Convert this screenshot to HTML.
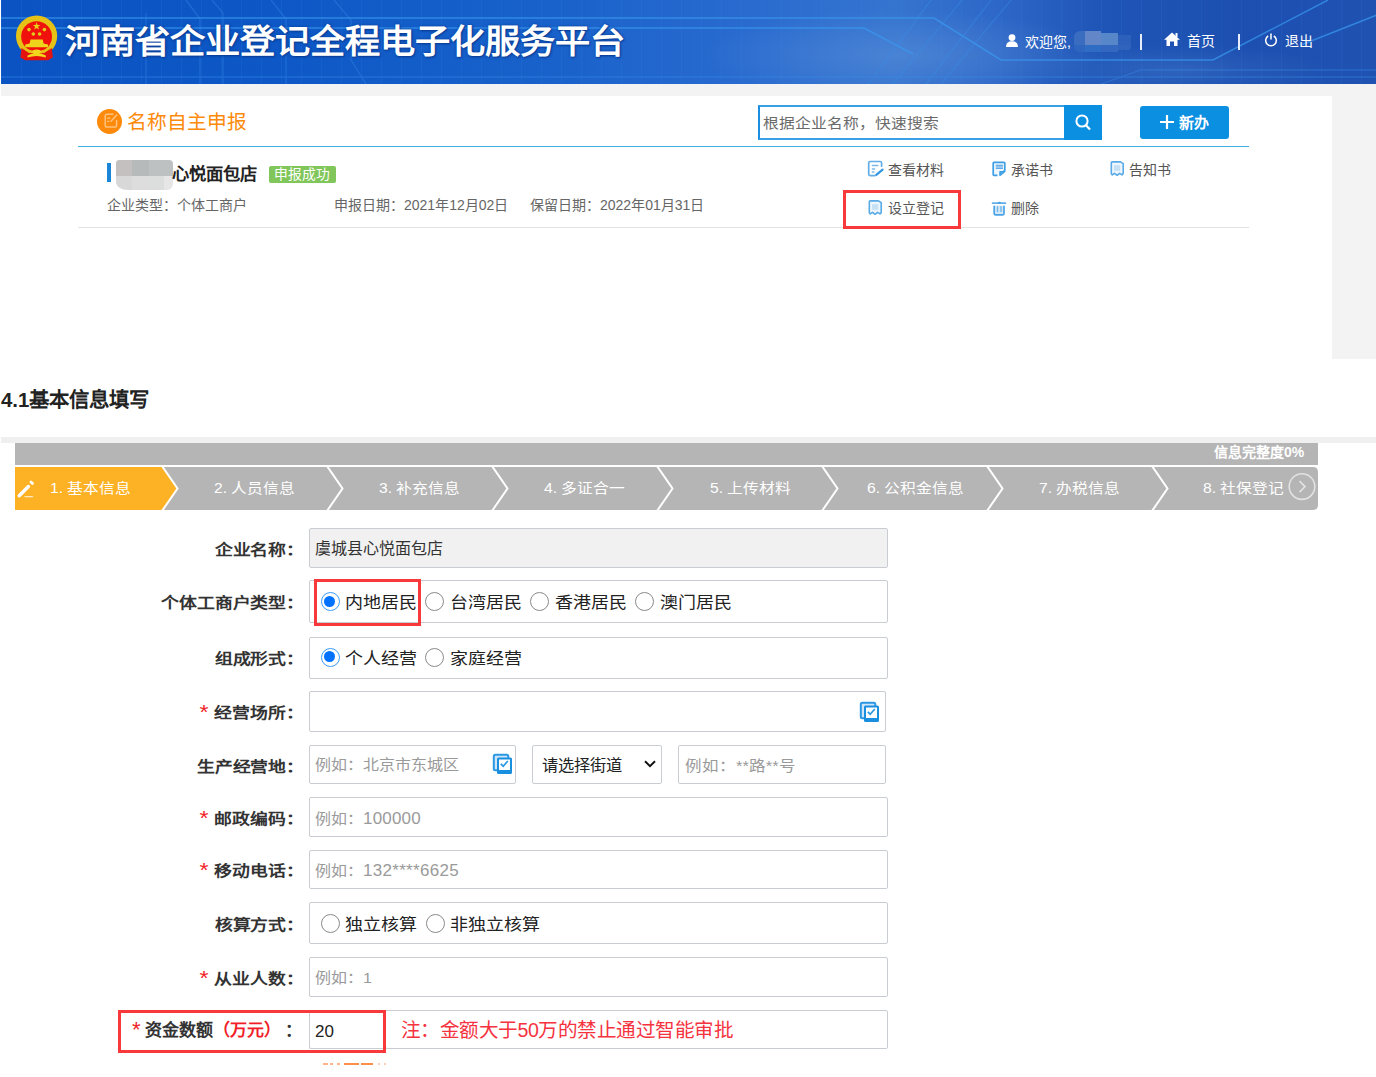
<!DOCTYPE html>
<html lang="zh-CN"><head><meta charset="utf-8">
<style>
*{margin:0;padding:0;box-sizing:border-box}
html,body{width:1376px;height:1077px;overflow:hidden;background:#fff;font-family:"Liberation Sans",sans-serif;color:#333}
.a{position:absolute;white-space:nowrap;line-height:1}
#banner{position:absolute;left:1px;top:0;width:1375px;height:84px;overflow:hidden;
background:linear-gradient(90deg,#0b53c2 0%,#0d58c6 20%,#1962cb 40%,#2a6bcf 55%,#3574cf 65%,#2e68c8 72%,#1f55b6 80%,#1c4fb0 90%,#2052b2 100%)}
#strip1{position:absolute;left:1px;top:84px;width:1375px;height:12px;background:#f3f3f3}
#rgray{position:absolute;left:1332px;top:96px;width:44px;height:263px;background:#f3f3f3}
.box{position:absolute;left:309px;width:579px;border:1px solid #c9cdd2;border-radius:2px;background:#fff}
.lbl{position:absolute;font-weight:bold;font-size:17px;color:#333;text-align:right;right:1072px;white-space:nowrap;line-height:1;transform:scale(1.05,0.9);transform-origin:100% 50%}
.star{color:#f01e28;font-weight:normal;margin-right:6px;display:inline-block;transform:scale(1.3,1.3) translate(-0.5px,-0.5px)}
.rad{position:absolute;width:19px;height:19px;border-radius:50%;border:1.5px solid #8a8a8a;background:#fff}
.rad.on{border:1.7px solid #3a9cfb}
.rad.on::after{content:"";position:absolute;left:2.8px;top:2.8px;width:11px;height:11px;border-radius:50%;background:#0072ff}
.rt{position:absolute;font-size:18px;color:#222;line-height:1;white-space:nowrap;transform:scaleY(0.9);transform-origin:0 50%}
.ph{position:absolute;font-size:16px;color:#9a9a9a;line-height:1;white-space:nowrap;transform:scaleY(.92);transform-origin:0 50%}
.tabx{position:absolute;top:467px;height:43px;color:#fff;font-size:15px}
</style></head><body>

<!-- ===== Screenshot 1: header ===== -->
<div id="banner">
  <svg width="1375" height="84" style="position:absolute;left:0;top:0">
    <defs>
      <radialGradient id="cloud" cx="0.5" cy="0.5" r="0.5">
        <stop offset="0" stop-color="#5a8fd8" stop-opacity="0.55"/>
        <stop offset="1" stop-color="#5a8fd8" stop-opacity="0"/>
      </radialGradient>
      <pattern id="grid" width="20" height="84" patternUnits="userSpaceOnUse">
        <rect x="0" y="0" width="1" height="84" fill="#3d8ae8" opacity="0.12"/>
      </pattern>
    </defs>
    <rect width="1375" height="84" fill="url(#grid)"/>
    <ellipse cx="900" cy="55" rx="200" ry="45" fill="url(#cloud)"/><ellipse cx="1180" cy="70" rx="150" ry="25" fill="url(#cloud)" opacity=".5"/>
    <g stroke="#3a9af0" stroke-width="1.5" fill="none" opacity="0.7">
      <path d="M0 18 H933 L1000 60 H1212 L1327 0"/>
      <path d="M1300 45 L1376 15"/>
      <path d="M0 28 H863 L912 54"/>
    </g>
    <g stroke="#3a90ec" stroke-width="1.3" fill="none" opacity="0.35">
      <path d="M0 77 H1376"/>
      <path d="M145 13 V84 M185 0 L199 19 V84 M211 0 L222 13 V84 M270 0 L285 19 V84 M333 0 L350 20 V60 L365 84"/>
      <path d="M863 90 L930 0 M887 90 L961 0 M925 84 L990 0 M940 84 L1010 0"/>
      <path d="M1100 84 L1140 70 H1376"/>
    </g>
  </svg>
  <!-- emblem -->
  <svg width="54" height="54" style="position:absolute;left:9px;top:10px" viewBox="10 10 54 54">
    <circle cx="36.6" cy="36" r="20.6" fill="#e6c216"/>
    <circle cx="36.6" cy="36.6" r="15.4" fill="#f0100c"/>
    <polygon points="36.6,22.2 37.6,25 40.4,25 38.1,26.8 39,29.6 36.6,27.9 34.2,29.6 35.1,26.8 32.8,25 35.6,25" fill="#e8d01a"/>
    <circle cx="29" cy="29.6" r="1.8" fill="#e2cc1c"/><circle cx="44.4" cy="29.6" r="1.8" fill="#e2cc1c"/>
    <circle cx="33.3" cy="34" r="1.8" fill="#e2cc1c"/><circle cx="39.6" cy="34" r="1.8" fill="#e2cc1c"/>
    <polygon points="30.5,39.6 42.7,39.6 43.6,43.4 48,44.4 48,47.2 25.2,47.2 25.2,44.4 29.6,43.4" fill="#eed41a"/>
    <path d="M23 47.5 Q36.6 57 50.5 47.5" fill="none" stroke="#e6c216" stroke-width="2.2"/>
    <path d="M21.5 48 L29 53 H44.2 L51.8 48 L52.8 57.5 L48 60.2 H25.2 L20.4 57.5 Z" fill="#e5130f"/>
    <path d="M27.5 55.4 Q36.6 50.8 45.8 55.4 V57.6 Q36.6 54.2 27.5 57.6 Z" fill="#f2d81c"/>
    <ellipse cx="36.6" cy="51.8" rx="4.2" ry="2.4" fill="#f2d81c"/>
  </svg>
  <div class="a" style="left:64px;top:24px;font-size:35.2px;font-weight:bold;color:#fff;text-shadow:0 0 3px #0b3d96,1px 1px 2px #0b3d96;transform:scaleY(.94);transform-origin:0 50%">河南省企业登记全程电子化服务平台</div>
  <!-- right nav -->
  <svg width="12" height="13" style="position:absolute;left:1005px;top:34px" viewBox="0 0 12 13"><circle cx="6" cy="3.6" r="3.4" fill="#fff"/><path d="M0 13 Q0 7.2 6 7.2 Q12 7.2 12 13 Z" fill="#fff"/></svg>
  <div class="a" style="left:1024px;top:35px;font-size:14px;color:#fff">欢迎您,</div>
  <div style="position:absolute;left:1073.2px;top:31px;width:57px;height:21px;overflow:hidden;border-radius:6px 3px 6px 6px">
<div style="position:absolute;left:0;top:0;width:10.6px;height:14px;background:#3a6cc0"></div>
<div style="position:absolute;left:10.6px;top:0;width:16.1px;height:14px;background:#6386c8"></div>
<div style="position:absolute;left:26.7px;top:1.5px;width:16.9px;height:12.5px;background:#5787c8"></div>
<div style="position:absolute;left:43.6px;top:4px;width:13.4px;height:10px;background:#2d60ba"></div>
<div style="position:absolute;left:0;top:14px;width:10.6px;height:7px;background:#2f66bf"></div>
<div style="position:absolute;left:10.6px;top:14px;width:16.1px;height:7px;background:#2f6cc4"></div>
<div style="position:absolute;left:26.7px;top:14px;width:16.9px;height:7px;background:#3468c0"></div>
<div style="position:absolute;left:43.6px;top:14px;width:13.4px;height:5px;background:#3063bb"></div>
</div>
  <div style="position:absolute;left:1138.5px;top:34px;width:2px;height:15.5px;background:#e6edfb"></div>
  <svg width="16" height="14" style="position:absolute;left:1163px;top:32px" viewBox="0 0 16 14"><path d="M8 0.5 L16 7.8 L13.5 7.8 L13.5 14 L10 14 L10 9.5 L6 9.5 L6 14 L2.5 14 L2.5 7.8 L0 7.8 Z" fill="#fff"/><rect x="11.5" y="1" width="2" height="4" fill="#fff"/></svg>
  <div class="a" style="left:1185.5px;top:34px;font-size:14px;color:#fff">首页</div>
  <div style="position:absolute;left:1237.3px;top:34px;width:2px;height:15.5px;background:#e6edfb"></div>
  <svg width="14" height="14" style="position:absolute;left:1263px;top:33px" viewBox="0 0 14 14"><path d="M4.2 3 A5.3 5.3 0 1 0 9.8 3" fill="none" stroke="#fff" stroke-width="1.5"/><path d="M7 0.5 V6.5" stroke="#fff" stroke-width="1.5"/></svg>
  <div class="a" style="left:1284px;top:34px;font-size:14px;color:#fff">退出</div>
</div>
<div id="strip1"></div>
<div id="rgray"></div>

<!-- title row -->
<div style="position:absolute;left:97px;top:108.6px;width:25.2px;height:25.2px;border-radius:50%;background:#fd8a0b"></div>
<svg width="18" height="18" style="position:absolute;left:103px;top:112px" viewBox="0 0 18 18"><path d="M10 2.2 H4 Q2.2 2.2 2.2 4 V13.2 Q2.2 15 4 15 H11.8 Q13.6 15 13.6 13.2 V8.5" fill="none" stroke="#ffc27e" stroke-width="1.5" stroke-linecap="round"/><path d="M8 9.2 L13.8 3" stroke="#ffc27e" stroke-width="1.5" stroke-linecap="round"/><path d="M4.6 6.2 H6.8 M4.6 9.4 H5.8" stroke="#ffc27e" stroke-width="1.3" stroke-linecap="round"/></svg>
<div class="a" style="left:126.5px;top:113px;font-size:19.8px;color:#fd8a0b">名称自主申报</div>

<div style="position:absolute;left:758px;top:105px;width:344px;height:35px;border:2px solid #3aa0e6;border-left-color:#1a8ee0;background:#fff"></div>
<div class="a" style="left:763px;top:116px;font-size:15.8px;color:#6a6a6a;transform:scaleY(.88);transform-origin:0 50%">根据企业名称，快速搜索</div>
<div style="position:absolute;left:1064px;top:105px;width:38px;height:35px;background:#0b8fe1"></div>
<svg width="16" height="17" style="position:absolute;left:1075px;top:114px" viewBox="0 0 16 17"><circle cx="7" cy="7" r="5.6" fill="none" stroke="#fff" stroke-width="2"/><path d="M11 11.2 L15 15.5" stroke="#fff" stroke-width="2.2"/></svg>
<div style="position:absolute;left:1140px;top:106px;width:89px;height:33px;background:#0b8fe1;border-radius:3px"></div>
<svg width="14" height="14" style="position:absolute;left:1160px;top:115px" viewBox="0 0 14 14"><path d="M7 0 V14 M0 7 H14" stroke="#fff" stroke-width="2.2"/></svg>
<div class="a" style="left:1179px;top:115px;font-size:15px;color:#fff;font-weight:bold">新办</div>

<div style="position:absolute;left:78px;top:145.5px;width:1171px;height:1.5px;background:#3cb0e3"></div>

<!-- company row -->
<div style="position:absolute;left:107px;top:163px;width:4px;height:19px;background:#1b86d8"></div>
<div style="position:absolute;left:115.7px;top:159.8px;width:57px;height:30px;overflow:hidden;border-radius:3px 4px 6px 12px / 3px 4px 6px 8px">
<div style="position:absolute;left:0;top:0;width:16.3px;height:16px;background:#c4c0c0"></div>
<div style="position:absolute;left:16.3px;top:0;width:16.8px;height:16px;background:#b7babb"></div>
<div style="position:absolute;left:33.1px;top:0;width:24px;height:16px;background:#bdc1c1"></div>
<div style="position:absolute;left:0;top:16px;width:16.3px;height:14px;background:#d8d8d8"></div>
<div style="position:absolute;left:16.3px;top:16px;width:16.8px;height:14px;background:#dddddd"></div>
<div style="position:absolute;left:33.1px;top:16px;width:15.7px;height:14px;background:#dcdddd"></div>
<div style="position:absolute;left:48.8px;top:16px;width:8.2px;height:14px;background:#e6e6e6"></div>
</div>
<div class="a" style="left:172px;top:166px;font-size:17.3px;font-weight:bold;color:#222">心悦面包店</div>
<div style="position:absolute;left:269px;top:166px;width:67px;height:17px;background:#80c65a;border-radius:2px"></div>
<div class="a" style="left:274px;top:168px;font-size:13.8px;color:#fff">申报成功</div>
<div class="a" style="left:107px;top:197.5px;font-size:14px;color:#666">企业类型：个体工商户</div>
<div class="a" style="left:334px;top:197.5px;font-size:14px;color:#666">申报日期：2021年12月02日</div>
<div class="a" style="left:530px;top:197.5px;font-size:14px;color:#666">保留日期：2022年01月31日</div>

<!-- actions -->
<svg width="24" height="24" style="position:absolute;left:864px;top:158px" viewBox="864 158 24 24">
  <path d="M875 175.6 H870.2 Q868.7 175.6 868.7 174.1 V163 Q868.7 161.5 870.2 161.5 H880.1 Q881.6 161.5 881.6 163 V166.2" fill="none" stroke="#62ade8" stroke-width="1.7" stroke-linecap="round"/>
  <path d="M872.4 165.4 H877.8 M872.4 169 H874.6 M872.4 171.9 H873.9" stroke="#7ab8ea" stroke-width="1.5" stroke-linecap="round"/>
  <path d="M876.3 174.9 L882.6 169.6" stroke="#3598e2" stroke-width="2.2" stroke-linecap="round"/>
</svg>
<div class="a" style="left:888px;top:162.5px;font-size:14px;color:#555">查看材料</div>
<svg width="24" height="24" style="position:absolute;left:986px;top:157px" viewBox="986 157 24 24">
  <path d="M997.5 175.4 H994 Q993.2 175.4 993.2 174.6 V163.1 Q993.2 162.3 994 162.3 H1004 Q1004.8 162.3 1004.8 163.1 V170.3 L1000.4 174.9" fill="#eef6fd" stroke="#3f9fe4" stroke-width="1.7" stroke-linejoin="round"/>
  <rect x="995.8" y="165.2" width="7.1" height="3.4" fill="#a9d0f0"/>
  <path d="M995.8 165.5 H1002.9 M995.8 168.4 H1002.9" stroke="#64ace8" stroke-width="1.3"/>
  <path d="M999.9 175.5 V171.6 H1004.9 Z" fill="#5aa8e6" stroke="#3f9fe4" stroke-width="1.2" stroke-linejoin="round"/>
</svg>
<div class="a" style="left:1011px;top:162.5px;font-size:14px;color:#555">承诺书</div>
<svg width="15" height="16" style="position:absolute;left:1109.5px;top:161px" viewBox="0 0 15 16">
  <path d="M1.3 1.8 Q1.3 0.9 2.2 0.9 H10.5 L13.2 2.6 V12.6 L12 13.9 L9.6 12.3 L7.1 14.3 L4.6 12.3 L2.3 13.9 L1.3 12.8 Z" fill="#eef6fd" stroke="#5aaae6" stroke-width="1.6" stroke-linejoin="round"/>
  <rect x="4" y="4.2" width="6.2" height="5.6" fill="#c6e0f5"/>
</svg>
<div class="a" style="left:1129px;top:162.5px;font-size:14px;color:#555">告知书</div>

<div style="position:absolute;left:843px;top:190px;width:118px;height:39px;border:3px solid #f8393c;z-index:2"></div>
<svg width="15" height="16" style="position:absolute;left:868.3px;top:200.4px" viewBox="0 0 15 16">
  <path d="M1.3 1.8 Q1.3 0.9 2.2 0.9 H10.5 L13.2 2.6 V12.6 L12 13.9 L9.6 12.3 L7.1 14.3 L4.6 12.3 L2.3 13.9 L1.3 12.8 Z" fill="#eef6fd" stroke="#5aaae6" stroke-width="1.6" stroke-linejoin="round"/>
  <rect x="4" y="4.2" width="6.2" height="5.6" fill="#c6e0f5"/>
</svg>
<div class="a" style="left:888px;top:201px;font-size:14px;color:#555">设立登记</div>
<svg width="24" height="24" style="position:absolute;left:986px;top:196px" viewBox="986 196 24 24">
  <rect x="994.6" y="205.6" width="9" height="8.8" fill="#d3e7f7"/>
  <path d="M992.6 203.2 H1005.5" stroke="#62ade8" stroke-width="1.7" stroke-linecap="round"/>
  <path d="M997.6 203.3 Q999.4 200.4 1001.2 203.3 Z" fill="#3a9fe6"/>
  <path d="M994.2 206.4 V213.4 Q994.2 214.9 995.7 214.9 H1002.5 Q1004 214.9 1004 213.4 V206.4" fill="none" stroke="#4aa3e6" stroke-width="1.7" stroke-linecap="round"/>
  <path d="M997.5 206.6 V211.4 M1001 206.6 V211.4" stroke="#73b6ea" stroke-width="1.4" stroke-linecap="round"/>
</svg>
<div class="a" style="left:1011px;top:201px;font-size:14px;color:#555">删除</div>

<div style="position:absolute;left:78px;top:227px;width:1171px;height:1px;background:#e3e3e3"></div>

<!-- ===== Heading ===== -->
<div class="a" style="left:1px;top:389.5px;font-size:20.4px;font-weight:bold;color:#222">4.1基本信息填写</div>

<!-- ===== Screenshot 2 ===== -->
<div style="position:absolute;left:1px;top:437px;width:1375px;height:6px;background:#efefef"></div>
<div style="position:absolute;left:15px;top:443px;width:1303px;height:22px;background:#b5b5b5"></div>
<div class="a" style="left:1214px;top:445px;font-size:14px;font-weight:bold;color:#fff">信息完整度0%</div>

<svg width="1303" height="43" style="position:absolute;left:15px;top:467px" viewBox="0 0 1303 43">
  <path d="M0 0 H1298 Q1303 0 1303 5 V38 Q1303 43 1298 43 H0 Z" fill="#b5b5b5"/>
  <path d="M0 0 H147 L162.5 21.5 L147 43 H0 Z" fill="#fdb226"/>
  <g fill="none" stroke="#fff" stroke-width="2">
    <path d="M147 -1 L162.5 21.5 L147 44"/>
    <path d="M312 -1 L327.5 21.5 L312 44"/>
    <path d="M477 -1 L492.5 21.5 L477 44"/>
    <path d="M642 -1 L657.5 21.5 L642 44"/>
    <path d="M807 -1 L822.5 21.5 L807 44"/>
    <path d="M972 -1 L987.5 21.5 L972 44"/>
    <path d="M1137 -1 L1152.5 21.5 L1137 44"/>
  </g>
  <path d="M4.2 28.8 L13.4 19.5" stroke="#fff" stroke-width="3.4" stroke-linecap="round"/>
  <path d="M16 15 L17.5 16.5" stroke="#fff" stroke-width="2.8" stroke-linecap="round" opacity=".95"/>
  <path d="M10 29.6 H17.6" stroke="#ffe9c0" stroke-width="1.3" stroke-linecap="round"/>
  <circle cx="1287" cy="19.6" r="12.8" fill="none" stroke="#e2e2e2" stroke-width="1.6"/>
  <path d="M1284.5 14 L1290 19.6 L1284.5 25.2" fill="none" stroke="#e6e6e6" stroke-width="1.5"/>
</svg>
<div class="a" style="left:50px;top:481px;font-size:15.7px;color:#fff;transform:scaleY(.9);transform-origin:0 50%">1. 基本信息</div>
<div class="a" style="left:214px;top:481px;font-size:15.7px;color:#fff;transform:scaleY(.9);transform-origin:0 50%">2. 人员信息</div>
<div class="a" style="left:379px;top:481px;font-size:15.7px;color:#fff;transform:scaleY(.9);transform-origin:0 50%">3. 补充信息</div>
<div class="a" style="left:544px;top:481px;font-size:15.7px;color:#fff;transform:scaleY(.9);transform-origin:0 50%">4. 多证合一</div>
<div class="a" style="left:710px;top:481px;font-size:15.7px;color:#fff;transform:scaleY(.9);transform-origin:0 50%">5. 上传材料</div>
<div class="a" style="left:867px;top:481px;font-size:15.7px;color:#fff;transform:scaleY(.9);transform-origin:0 50%">6. 公积金信息</div>
<div class="a" style="left:1039px;top:481px;font-size:15.7px;color:#fff;transform:scaleY(.9);transform-origin:0 50%">7. 办税信息</div>
<div class="a" style="left:1203px;top:481px;font-size:15.7px;color:#fff;transform:scaleY(.9);transform-origin:0 50%">8. 社保登记</div>

<!-- form rows -->
<div class="lbl" style="top:542px">企业名称：</div>
<div class="box" style="top:528px;height:40px;background:#f1f1f1"></div>
<div class="a" style="left:315px;top:541px;font-size:16px;color:#333">虞城县心悦面包店</div>

<div class="lbl" style="top:595px">个体工商户类型：</div>
<div class="box" style="top:580px;height:43px"></div>
<div class="rad on" style="left:320.5px;top:592px"></div><div class="rt" style="left:345px;top:594px">内地居民</div>
<div class="rad" style="left:425px;top:592px"></div><div class="rt" style="left:450px;top:594px">台湾居民</div>
<div class="rad" style="left:530px;top:592px"></div><div class="rt" style="left:555px;top:594px">香港居民</div>
<div class="rad" style="left:635px;top:592px"></div><div class="rt" style="left:659.5px;top:594px">澳门居民</div>
<div style="position:absolute;left:314px;top:579px;width:107px;height:47px;border:3px solid #f8393c"></div>

<div class="lbl" style="top:651px">组成形式：</div>
<div class="box" style="top:636.5px;height:42px"></div>
<div class="rad on" style="left:320.5px;top:647.5px"></div><div class="rt" style="left:345px;top:650px">个人经营</div>
<div class="rad" style="left:425px;top:647.5px"></div><div class="rt" style="left:450px;top:650px">家庭经营</div>

<div class="lbl" style="top:705px"><span class="star">*</span>经营场所：</div>
<div class="box" style="top:691px;height:41px;width:577px"></div>
<svg width="21" height="22" style="position:absolute;left:859px;top:701px" viewBox="0 0 21 22"><rect x="1.8" y="1.8" width="14.5" height="15.5" rx="1.5" fill="#cfe6f8" stroke="#2a98e2" stroke-width="2"/><rect x="5" y="4.5" width="15" height="16.5" rx="1.5" fill="#1a8fe0"/><rect x="7" y="6.5" width="11" height="10.5" fill="#fff"/><path d="M8.8 10.8 L11.2 13.2 L15.8 8" fill="none" stroke="#2a98e2" stroke-width="1.7"/></svg>

<div class="lbl" style="top:759px">生产经营地：</div>
<div class="box" style="top:745px;height:39px;width:207px"></div>
<div class="ph" style="left:315px;top:757px">例如：北京市东城区</div>
<svg width="21" height="22" style="position:absolute;left:492px;top:753px" viewBox="0 0 21 22"><rect x="1.8" y="1.8" width="14.5" height="15.5" rx="1.5" fill="#cfe6f8" stroke="#2a98e2" stroke-width="2"/><rect x="5" y="4.5" width="15" height="16.5" rx="1.5" fill="#1a8fe0"/><rect x="7" y="6.5" width="11" height="10.5" fill="#fff"/><path d="M8.8 10.8 L11.2 13.2 L15.8 8" fill="none" stroke="#2a98e2" stroke-width="1.7"/></svg>
<div class="box" style="left:532px;top:745px;height:39px;width:130px"></div>
<div class="a" style="left:542px;top:757px;font-size:16.3px;color:#222">请选择街道</div>
<svg width="12" height="8" style="position:absolute;left:644px;top:760px" viewBox="0 0 12 8"><path d="M1 1.2 L6 6.2 L11 1.2" fill="none" stroke="#111" stroke-width="2"/></svg>
<div class="box" style="left:678px;top:745px;height:39px;width:208px"></div>
<div class="ph" style="left:685px;top:757px;font-size:16.5px">例如：**路**号</div>

<div class="lbl" style="top:811px"><span class="star">*</span>邮政编码：</div>
<div class="box" style="top:797px;height:40px"></div>
<div class="ph" style="left:315px;top:810px">例如：<span style="font-size:17px;letter-spacing:0.2px">100000</span></div>

<div class="lbl" style="top:863px"><span class="star">*</span>移动电话：</div>
<div class="box" style="top:850px;height:38.5px"></div>
<div class="ph" style="left:315px;top:862px">例如：<span style="font-size:17px;letter-spacing:0.3px">132****6625</span></div>

<div class="lbl" style="top:917px">核算方式：</div>
<div class="box" style="top:902px;height:42px"></div>
<div class="rad" style="left:320.5px;top:913.5px"></div><div class="rt" style="left:345px;top:916px">独立核算</div>
<div class="rad" style="left:425.5px;top:913.5px"></div><div class="rt" style="left:450px;top:916px">非独立核算</div>

<div class="lbl" style="top:971px"><span class="star">*</span>从业人数：</div>
<div class="box" style="top:957px;height:40px"></div>
<div class="ph" style="left:315px;top:970px">例如：1</div>

<div class="a" style="left:131px;top:1022px;font-size:17px;color:#f01e28;transform:scale(1.3,1.3) translate(1.5px,-0.5px)">*</div>
<div class="a" style="left:145px;top:1022px;font-size:17px;font-weight:bold;color:#333">资金数额<span style="color:#f01e28">（万元）</span></div>
<div class="a" style="left:285px;top:1022px;font-size:17px;font-weight:bold;color:#333">：</div>
<div class="box" style="left:309px;top:1010.5px;height:38.5px;width:77px;border-right:none"></div>
<div class="box" style="left:385px;top:1010px;height:39px;width:503px"></div>
<div class="a" style="left:315px;top:1023px;font-size:17px;color:#222">20</div>
<div class="a" style="left:400.5px;top:1020.5px;font-size:19.6px;letter-spacing:-0.5px;color:#f5333f">注：金额大于50万的禁止通过智能审批</div>
<div style="position:absolute;left:118px;top:1010px;width:268px;height:43px;border:3px solid #f8393c"></div>

<svg width="70" height="2" style="position:absolute;left:322px;top:1062.5px"><g stroke="#ff6a10" stroke-width="1.2"><path d="M1 1 H6 M8 1 H11 M15 1 H18"/><path d="M22 1 H37 M39 1 H51" stroke-width="1.5"/><path d="M56 1 H58 M62 1 H64" opacity=".6"/></g></svg>
</body></html>
